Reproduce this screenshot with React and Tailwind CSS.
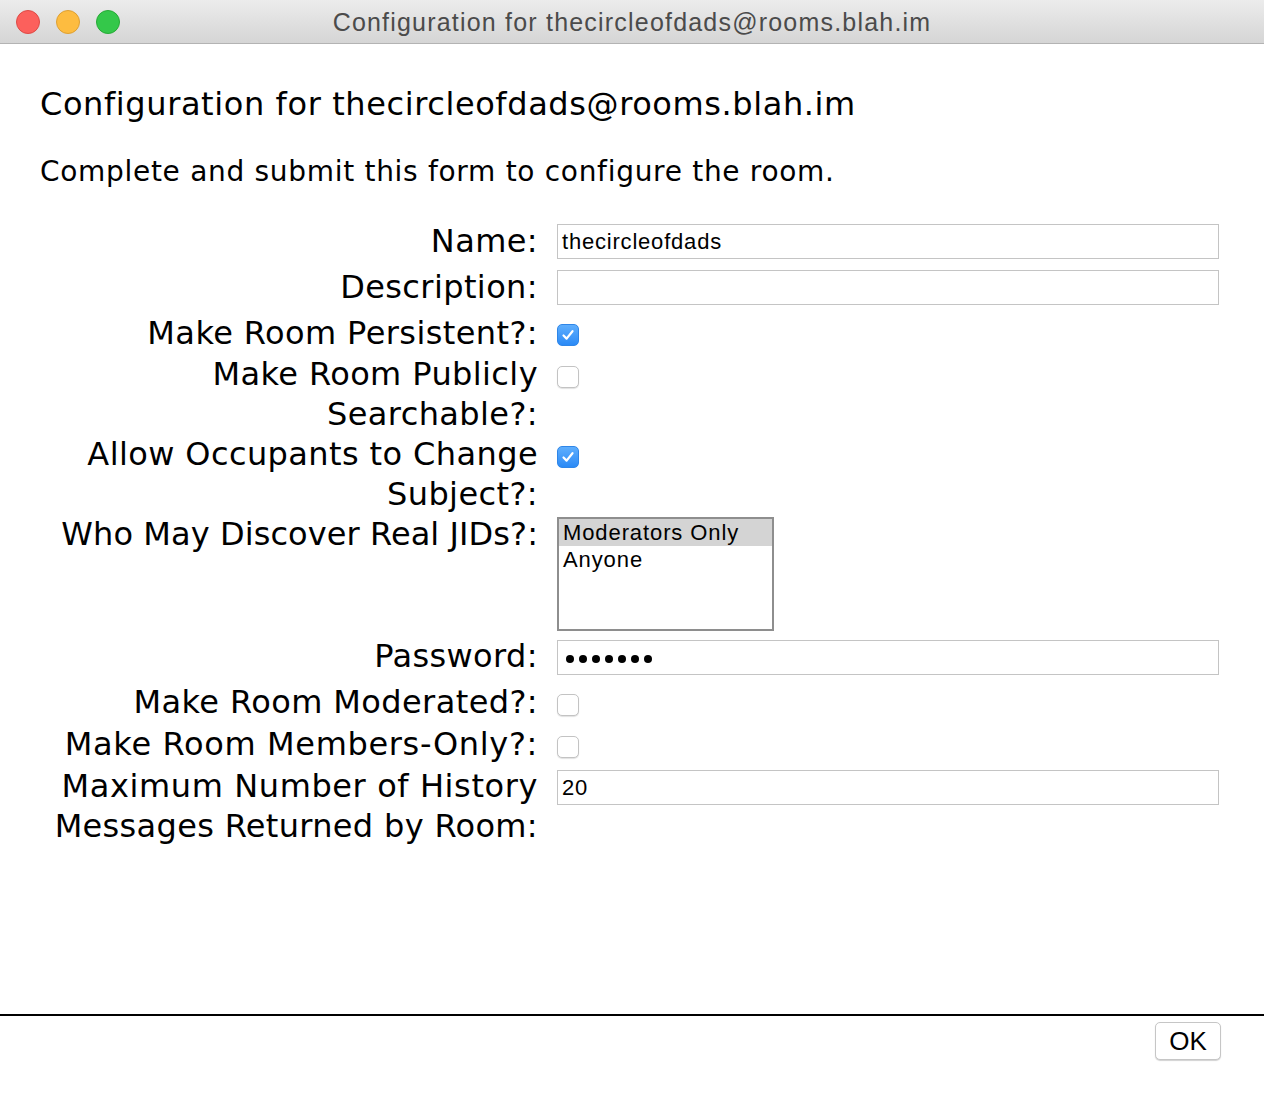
import React from "react";

const labelCls =
  "w-[498px] shrink-0 text-right text-[32px] leading-[40px] tracking-[0.4px] text-black whitespace-nowrap";

const helv = { fontFamily: '"Liberation Sans", Arial, sans-serif' };

function Checkbox({ checked }) {
  if (checked) {
    return (
      <div className="w-[22px] h-[22px] rounded-[5px] bg-gradient-to-b from-[#5eaefd] to-[#2a8af6] border border-[#2f86e8] flex items-center justify-center">
        <svg width="14" height="14" viewBox="0 0 14 14">
          <path d="M2.5 7.5 L5.6 10.6 L11.5 3.2" fill="none" stroke="white" strokeWidth="2.2" strokeLinecap="round" strokeLinejoin="round" />
        </svg>
      </div>
    );
  }
  return (
    <div className="w-[22px] h-[22px] rounded-[5px] bg-white border border-[#c3c3c3] shadow-[0_1px_1px_rgba(0,0,0,0.12)]" />
  );
}

function TextInput({ value, password }) {
  return (
    <div className="w-[662px] h-[35px] border border-[#c4c4c4] bg-white flex items-center px-[4px] text-[22px] tracking-[0.8px] text-black" style={helv}>
      {password ? (
        <div className="flex gap-[5px] ml-[4px] mt-[2px]">
          {Array.from({ length: 7 }).map((_, i) => (
            <span key={i} className="w-[8px] h-[8px] rounded-full bg-black inline-block" />
          ))}
        </div>
      ) : (
        value
      )}
    </div>
  );
}

export default function App() {
  return (
    <div className="w-[1264px] h-[1106px] bg-white flex flex-col overflow-hidden" style={{ fontFamily: '"DejaVu Sans", sans-serif' }}>
      {/* Title bar */}
      <div className="h-[44px] shrink-0 relative flex items-center justify-center bg-gradient-to-b from-[#ececec] to-[#d5d5d5] border-b border-[#b3b3b3]">
        <div className="absolute left-[16px] top-[10px] flex gap-[16px]">
          <div className="w-[24px] h-[24px] rounded-full bg-[#fc605c] border border-[#de4a45]" />
          <div className="w-[24px] h-[24px] rounded-full bg-[#fdbc40] border border-[#dea032]" />
          <div className="w-[24px] h-[24px] rounded-full bg-[#34c84a] border border-[#27aa36]" />
        </div>
        <div className="text-[25px] tracking-[1.2px] text-[#4b4b4b] leading-none mt-[2px]" style={helv}>
          Configuration for thecircleofdads@rooms.blah.im
        </div>
      </div>

      {/* Content */}
      <div className="flex-1 px-[40px]">
        <div className="mt-[40px] text-[32px] leading-[40px] tracking-[0.6px] text-black whitespace-nowrap">
          Configuration for thecircleofdads@rooms.blah.im
        </div>
        <div className="mt-[30px] text-[28px] leading-[36px] tracking-[0.7px] text-black whitespace-nowrap">
          Complete and submit this form to configure the room.
        </div>

        <div className="mt-[31px] flex flex-col">
          {/* Name */}
          <div className="flex h-[46px]">
            <div className={labelCls}>Name:</div>
            <div className="ml-[19px] mt-[3px]"><TextInput value="thecircleofdads" /></div>
          </div>
          {/* Description */}
          <div className="flex h-[46px]">
            <div className={labelCls}>Description:</div>
            <div className="ml-[19px] mt-[3px]"><TextInput value="" /></div>
          </div>
          {/* Persistent */}
          <div className="flex h-[41px]">
            <div className={labelCls}>Make Room Persistent?:</div>
            <div className="ml-[19px] mt-[11px]"><Checkbox checked /></div>
          </div>
          {/* Publicly */}
          <div className="flex h-[80px]">
            <div className={labelCls}>Make Room Publicly<br />Searchable?:</div>
            <div className="ml-[19px] mt-[12px]"><Checkbox /></div>
          </div>
          {/* Allow */}
          <div className="flex h-[80px]">
            <div className={labelCls}>Allow Occupants to Change<br />Subject?:</div>
            <div className="ml-[19px] mt-[12px]"><Checkbox checked /></div>
          </div>
          {/* Who */}
          <div className="flex h-[122px]">
            <div className={labelCls + " tracking-[0.08px]"}>Who May Discover Real JIDs?:</div>
            <div className="ml-[19px] mt-[3px]">
              <div className="w-[217px] h-[114px] border-2 border-[#8e8e8e] bg-white text-[22px] tracking-[0.9px] leading-[28px] text-black" style={helv}>
                <div className="bg-[#d4d4d4] px-[4px] h-[27px] leading-[27px]">Moderators Only</div>
                <div className="px-[4px]">Anyone</div>
              </div>
            </div>
          </div>
          {/* Password */}
          <div className="flex h-[46px]">
            <div className={labelCls}>Password:</div>
            <div className="ml-[19px] mt-[4px]"><TextInput password /></div>
          </div>
          {/* Moderated */}
          <div className="flex h-[42px]">
            <div className={labelCls}>Make Room Moderated?:</div>
            <div className="ml-[19px] mt-[12px]"><Checkbox /></div>
          </div>
          {/* Members */}
          <div className="flex h-[42px]">
            <div className={labelCls + " tracking-[0.65px]"}>Make Room Members-Only?:</div>
            <div className="ml-[19px] mt-[12px]"><Checkbox /></div>
          </div>
          {/* Max */}
          <div className="flex h-[80px]">
            <div className={labelCls}>
              <div className="tracking-[0.6px]">Maximum Number of History</div>
              <div className="tracking-[0.33px]">Messages Returned by Room:</div>
            </div>
            <div className="ml-[19px] mt-[4px]"><TextInput value="20" /></div>
          </div>
        </div>
      </div>

      {/* Footer */}
      <div className="h-[92px] shrink-0 border-t-2 border-black flex justify-end items-start pr-[43px] pt-[6px]">
        <button className="w-[66px] h-[38px] rounded-[5px] border border-[#c6c6c6] bg-white shadow-[0_1px_1px_rgba(0,0,0,0.18)] text-[26px] leading-none text-black" style={helv}>
          OK
        </button>
      </div>
    </div>
  );
}
